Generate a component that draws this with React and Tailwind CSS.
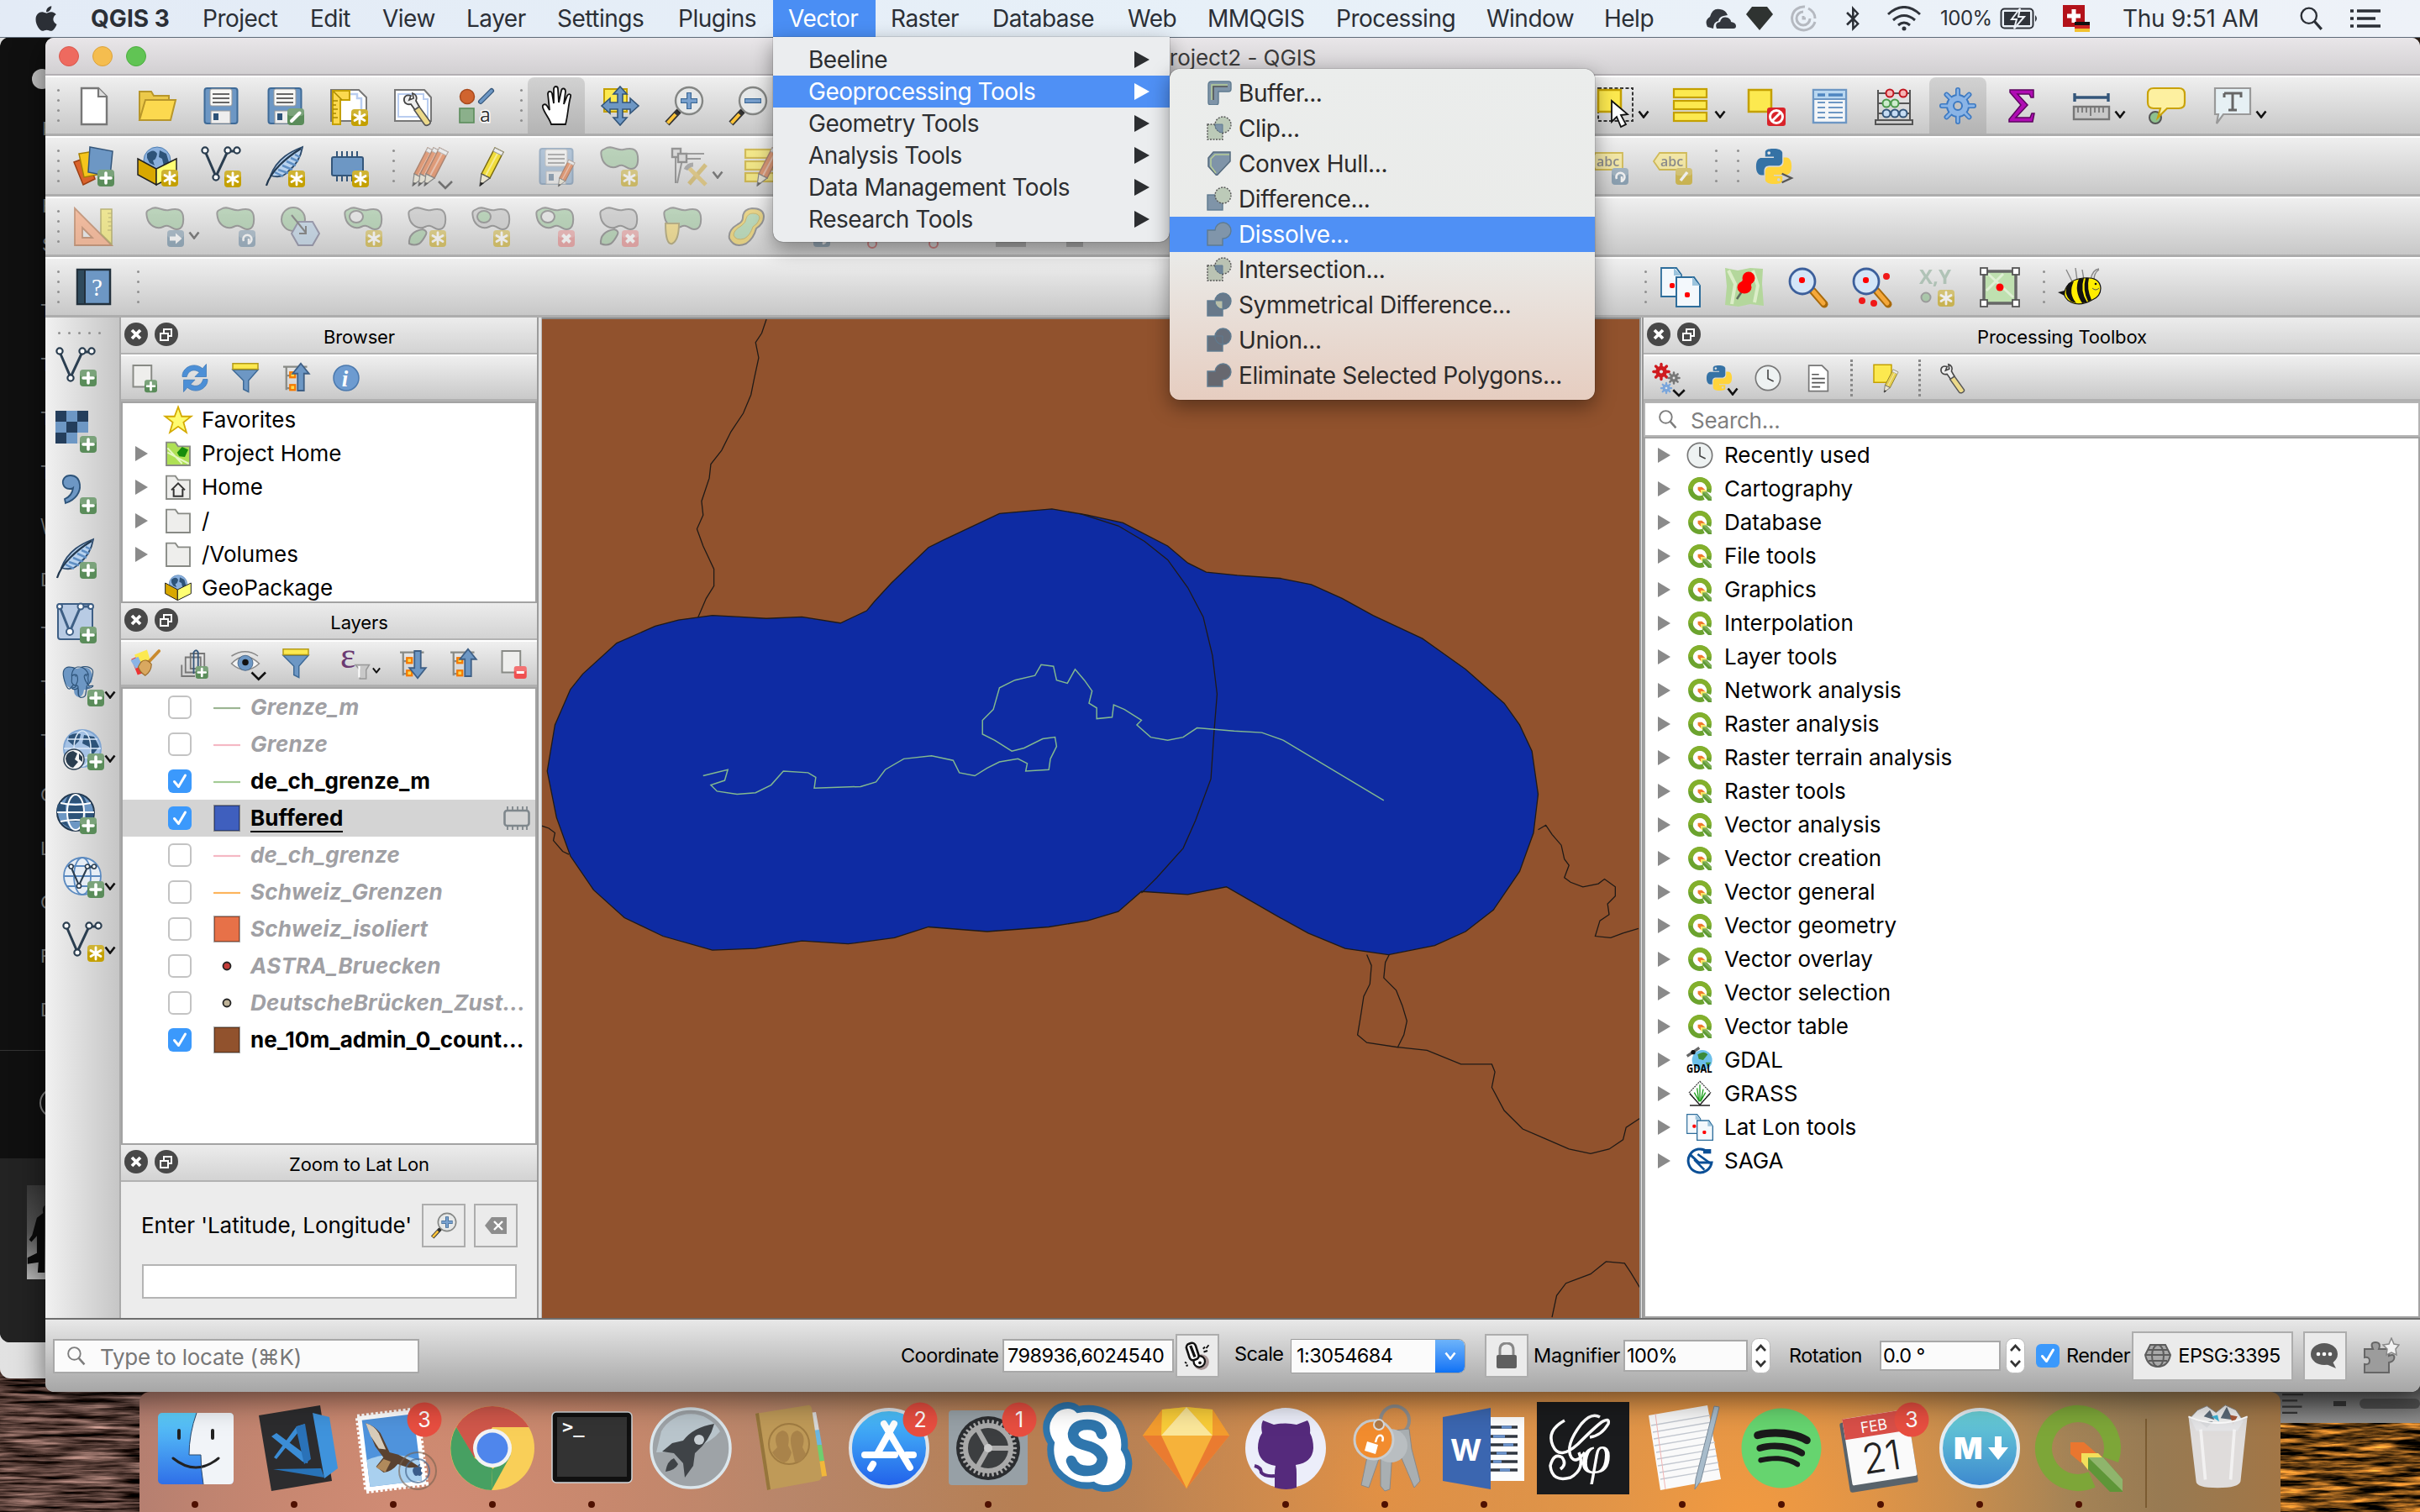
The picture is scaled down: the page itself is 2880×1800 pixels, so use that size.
import React from "react";
import { FaApple, FaBluetoothB, FaSpotify } from "react-icons/fa";
import { SiPostgresql } from "react-icons/si";

/* ---------- icon primitives ---------- */
const Ico = ({ children, c = "w-12 h-12", o = "", vb = "0 0 48 48" }) => (
  <svg viewBox={vb} className={`shrink-0 overflow-visible ${c} ${o}`} fill="none">{children}</svg>
);
const Badge = ({ fill, x = 28, y = 28, children }) => (
  <g transform={`translate(${x} ${y})`}>
    <rect width="20" height="20" rx="4" fill={fill} />
    <rect width="20" height="9" rx="4" fill="#fff" opacity=".2" />
    {children}
  </g>
);
const PlusB = (p) => <Badge fill="#5a8c5a" {...p}><path d="M10 4v12M4 10h12" stroke="#fff" strokeWidth="3.6" strokeLinecap="round" /></Badge>;
const StarB = (p) => <Badge fill="#c4a000" {...p}><path d="M10 3v14M4 6.5l12 7M16 6.5l-12 7" stroke="#fff" strokeWidth="2.8" strokeLinecap="round" /></Badge>;
const RotB = (p) => <Badge fill="#5b7d99" {...p}><path d="M6 13a5 5 0 1 1 6 2.5M12 10v7" stroke="#fff" strokeWidth="2.6" /></Badge>;
const XB = (p) => <Badge fill="#e07070" {...p}><path d="M5.5 5.5l9 9M14.5 5.5l-9 9" stroke="#fff" strokeWidth="4" /></Badge>;
const ArrB = (p) => <Badge fill="#4d7390" {...p}><path d="M3 7.5h7V3.5L17.5 10 10 16.5v-4H3z" fill="#fff" /></Badge>;
const PenB = (p) => <Badge fill="#5a8c5a" {...p}><path d="M5 15L14.5 5.5" stroke="#fff" strokeWidth="4" strokeLinecap="round" /></Badge>;

const Chev = ({ c = "", s = "#111" }) => (
  <svg viewBox="0 0 14 10" className={`w-3.5 h-2.5 shrink-0 ${c}`} fill="none"><path d="M1.5 1.5L7 8.5l5.5-7" stroke={s} strokeWidth="2.6" /></svg>
);
const Grip = ({ c = "w-[19px] pl-[14px]" }) => (
  <div className={`flex h-full shrink-0 flex-col justify-center gap-[9px] ${c}`}>
    {[0, 1, 2, 3].map((i) => <i key={i} className="block h-[3px] w-[3px] rounded-full bg-[#8f8f8f]" />)}
  </div>
);
const Slot = ({ children, c = "w-[76px]" }) => <div className={`flex h-full shrink-0 items-center justify-center ${c}`}>{children}</div>;
const SlotV = ({ children, c = "w-[92px]", s }) => (
  <div className={`flex h-full shrink-0 items-center pl-[17px] ${c}`}>
    {children}<Chev c="mt-5 ml-[3px]" s={s} />
  </div>
);

/* ---------- toolbar icons ---------- */
const Page = () => <path d="M8 3h22l10 10v33H8z" fill="#fff" stroke="#777" strokeWidth="2.4" />;
const NewDoc = () => <Ico><path d="M9 3h20l10 10v33H9z" fill="#fff" stroke="#777" strokeWidth="2.4" /><path d="M29 3v10h10" fill="#ddd" stroke="#777" strokeWidth="2.2" /></Ico>;
const Folder = () => <Ico><path d="M3 41V7h14l3 5h18v6" fill="#ecc94a" stroke="#b8962a" strokeWidth="2" /><path d="M3 41L10 17h36l-6 24z" fill="#fcd94f" stroke="#b8962a" strokeWidth="2" /></Ico>;
const Disk = ({ o }) => (
  <g opacity={o}>
    <rect x="4.500" y="3" width="39" height="42" rx="3" fill="#6d97c4" stroke="#3e6a97" strokeWidth="2" />
    <rect x="11" y="4" width="26" height="20" rx="2" fill="#f7f7f5" stroke="#999" />
    <path d="M14 10h20M14 15h20M14 20h20" stroke="#666" strokeWidth="2" />
    <rect x="12" y="30" width="23" height="15" fill="#eee" stroke="#999" /><rect x="15" y="33" width="6" height="8" fill="#2d5379" />
  </g>
);
const Layout = () => (
  <Ico><path d="M3 5h33l9 9v28H3z" fill="#fff" stroke="#777" strokeWidth="2" /><path d="M14 10h20v5h5v22" stroke="#b9cdf0" strokeWidth="2.5" />
    <path d="M5 6h20v11H14v29H5z" fill="#fcd94f" stroke="#c4a000" strokeWidth="2" /><path d="M5 18h6M5 23h4M5 28h6M5 33h4M5 38h6M6 7l10 10" stroke="#a88800" strokeWidth="1.5" /><StarB x={27} /></Ico>
);
const Wrench = () => (
  <g><path d="M22 12c-5-2-9 1-8 6 .6 3 4 5 8 4l5 7 5-4-4-7c2-4 0-8-4-9l1 6-5 2z" fill="#eee" stroke="#444" strokeWidth="1.8" />
    <path d="M26 29l6-4 13 18c1 3-5 6-7 3z" fill="#ecd98a" stroke="#555" strokeWidth="1.6" /></g>
);
const LayoutMgr = () => <Ico><path d="M3 5h35l8 9v28H3z" fill="#fff" stroke="#777" strokeWidth="2" /><path d="M7 10h30v6h5v21H7z" stroke="#b9cdf0" strokeWidth="2" /><Wrench /></Ico>;
const StyleMgr = () => (
  <Ico><circle cx="13" cy="13" r="8.500" fill="#d0642f" stroke="#a84b1e" strokeWidth="1.5" /><path d="M29 19L42 6" stroke="#34567a" strokeWidth="6" strokeLinecap="round" /><path d="M29 19L42 6" stroke="#6d97c4" strokeWidth="3.5" strokeLinecap="round" />
    <rect x="4" y="27" width="17" height="17" fill="#8bb08b" stroke="#5a8c5a" strokeWidth="1.6" /><text x="28" y="43" fontSize="23" fontFamily="Open Sans" fill="#333" stroke="#fff" strokeWidth="3" paintOrder="stroke">a</text></Ico>
);
const Hand = () => (
  <Ico><path d="M15 46c-2-7-8-13-10-20-1-4 3-5 5-2l3 5-2-19c0-4 4-4 5-1l2 12V4c0-4 5-4 5 0l1 16 3-14c1-4 5-3 5 1l-2 15 4-10c2-3 5-2 4 1-3 11-3 22-6 33z" fill="#fff" stroke="#111" strokeWidth="1.8" /></Ico>
);
const PanSel = () => (
  <Ico><rect x="5" y="4" width="27" height="27" fill="#fce94f" stroke="#c4a000" strokeWidth="2" />
    <path d="M24 1l8 9h-5v10h9v-5l10 9-10 9v-5h-9v10h5l-8 9-8-9h5V28H12v5L2 24l10-9v5h9V10h-5z" fill="#6d97c4" stroke="#34567a" strokeWidth="1.6" /></Ico>
);
const Mag = ({ plus, c }) => (
  <Ico c={c}><path d="M18 30L4 45" stroke="#333" strokeWidth="7" /><path d="M14 34L4.500 44.500" stroke="#fcc43a" strokeWidth="4" /><path d="M17 31l4-4" stroke="#222" strokeWidth="5" />
    <circle cx="30" cy="18" r="16" fill="#e6e8e8" stroke="#848684" strokeWidth="2.4" />
    <path d={plus ? "M20 18h20M30 8v20" : "M20 18h20"} stroke="#3e6a97" strokeWidth="6" /><path d={plus ? "M21 18h18M30 9v18" : "M21 18h18"} stroke="#7aa2cf" strokeWidth="3.5" /></Ico>
);
const Cursor = () => (
  <Ico><rect x="4" y="3" width="41" height="39" stroke="#333" strokeWidth="2" strokeDasharray="4 2.500" /><rect x="4" y="5" width="27" height="26" fill="#fce94f" stroke="#c4a000" strokeWidth="2.5" />
    <path d="M20 18v25l6-6 5 12 6-3-6-11 8-1z" fill="#fff" stroke="#111" strokeWidth="1.8" /></Ico>
);
const Bars = ({ pencil }) => (
  <Ico>{[4, 18, 32].map((y) => <rect key={y} x="3" y={y} width="39" height="10" fill="#fce94f" stroke="#c4a000" strokeWidth="2.200" />)}{pencil && <Pen x={8} />}</Ico>
);
const Desel = () => <Ico><rect x="3" y="5" width="27" height="26" fill="#fce94f" stroke="#c4a000" strokeWidth="2.500" /><rect x="25" y="26" width="22" height="22" rx="3" fill="#d9232a" /><circle cx="36" cy="37" r="7.500" stroke="#fff" strokeWidth="3" /><path d="M31 42l10-10" stroke="#fff" strokeWidth="3" /></Ico>;
const Table = () => (
  <Ico><rect x="4" y="5" width="39" height="39" fill="#f4f6f8" stroke="#6d97c4" strokeWidth="2.400" /><rect x="5" y="6" width="37" height="9" fill="#b9d7f0" />
    <path d="M9 11h9M22 11h17" stroke="#4f86c0" strokeWidth="3.500" /><path d="M9 20h9M22 20h17M9 26h9M22 26h17M9 32h9M22 32h17M9 38h9M22 38h17" stroke="#6d97c4" strokeWidth="2.200" /><path d="M4 16h39" stroke="#6d97c4" strokeWidth="2" /></Ico>
);
const Abacus = () => (
  <Ico><path d="M5 5v36M43 5v36M5 9h38M5 21h38M5 33h38" stroke="#555" strokeWidth="2" /><rect x="2" y="41" width="44" height="5" fill="#ccc" stroke="#555" strokeWidth="2" />
    {[[19, 9, "#f6b5b5", "#c0151f"], [35, 9, "#f6b5b5", "#c0151f"], [15, 21, "#cdeccd", "#4c9a4c"], [25, 21, "#cdeccd", "#4c9a4c"], [15, 33, "#c6dcf3", "#34567a"], [25, 33, "#c6dcf3", "#34567a"], [35, 33, "#c6dcf3", "#34567a"]].map(([x, y, f, s], i) => <circle key={i} cx={x} cy={y} r="4.500" fill={f} stroke={s} strokeWidth="2" />)}</Ico>
);
const gearTeeth = (n, r1, r2, w) => Array.from({ length: n }, (_, i) => {
  const a = (i * 2 * Math.PI) / n;
  return <line key={i} x1={Math.cos(a) * r1} y1={Math.sin(a) * r1} x2={Math.cos(a) * r2} y2={Math.sin(a) * r2} strokeWidth={w} strokeLinecap="round" />;
});
const Gear = () => (
  <Ico><g transform="translate(24 24)"><g stroke="#3c79c2">{gearTeeth(8, 10, 19, 6)}</g><circle r="13" fill="#8ab4e6" stroke="#3c79c2" strokeWidth="2" />
    <g stroke="#8ab4e6">{gearTeeth(8, 10, 19, 2.8)}</g><circle r="5" fill="#c2c2c2" stroke="#3c79c2" strokeWidth="2" /></g></Ico>
);
const Sigma = () => <Ico><path d="M10 5h28v9h-3l-2-4H19l12 13-14 15h17l2-5h3l-2 10H9v-3l14-17L10 8z" fill="#b00cb4" stroke="#5d0560" strokeWidth="1.500" /></Ico>;
const Ruler = () => <Ico><path d="M4 14h40M4 9v10M44 9v10" stroke="#34567a" strokeWidth="3.400" /><rect x="3" y="25" width="42" height="15" fill="#c8c8c8" stroke="#777" strokeWidth="2.400" /><path d="M8 26v6M13 26v6M18 26v6M23 26v10M28 26v6M33 26v6M38 26v6" stroke="#777" strokeWidth="1.800" /></Ico>;
const Tip = () => <Ico><circle cx="11" cy="38" r="7" fill="#8ec08e" stroke="#555" strokeWidth="2" /><path d="M9 3h30q7 0 7 7v10q0 7-7 7H25L14 38l3-11H9q-7 0-7-7V10q0-7 7-7z" fill="#fdf0a0" stroke="#c9a20a" strokeWidth="2.200" /></Ico>;
const TextAnn = () => <Ico><path d="M3 3h42v31H13L5 45l2-11H3z" fill="#e6f0f4" stroke="#999" strokeWidth="2.200" /><path d="M14 9h20v5M14 14V9M24 9v20M19 29h10" stroke="#666" strokeWidth="3" /></Ico>;

const AddData = () => <Ico><path d="M1 19l16-6 9 26-14 7z" fill="#d9622b" stroke="#9b3f14" strokeWidth="1.500" /><path d="M7 9l18-3 4 28-16 3z" fill="#f5c51c" stroke="#a68005" strokeWidth="1.500" /><path d="M20 1l27 5-3 30-26-5z" fill="#6d97c4" stroke="#34567a" strokeWidth="1.500" /><PlusB x={29} /></Ico>;
const Box = ({ badge, c }) => (
  <Ico c={c}><circle cx="24" cy="17" r="16" fill="#8ab0dd" stroke="#4f7fb4" /><path d="M12 9q8-7 12 0-1 7-5 8l2 6-6-3-3-6zM27 5l8 4 3 10-6 5-2-9-4-2z" fill="#2d5379" />
    <path d="M1 15l22 12v19L1 34z" fill="#d9a800" stroke="#222" strokeWidth="1.500" /><path d="M47 15L23 27v19l24-12z" fill="#ffff73" stroke="#222" strokeWidth="1.500" />{badge && <StarB x={29} />}</Ico>
);
const VLine = ({ children, globe }) => (
  <Ico>{globe && <g stroke="#5b8ac0" strokeWidth="1.800"><circle cx="24" cy="22" r="22" fill="#e6edf5" /><ellipse cx="24" cy="22" rx="10" ry="22" /><path d="M2 22h44M6 10h36M6 34h36" /></g>}
    <g transform={globe ? "translate(7 7) scale(.72)" : ""} stroke="#2b3e50"><path d="M5 6l13 30L32 6h12" strokeWidth="3" />
      {[[5, 5], [18, 37], [32, 5], [43, 5]].map(([x, y]) => <circle key={x} cx={x} cy={y} r="3.600" fill="#fff" strokeWidth="2.200" />)}</g>{children}</Ico>
);
const Feather = ({ children }) => (
  <Ico><path d="M45 1C32 6 15 14 7 35c10 3 17 0 21-5 10-8 15-17 17-29z" fill="#b8d2ee" stroke="#2d4a6b" strokeWidth="1.800" /><path d="M36 10l6 3M31 14l9 4M26 18l11 5M21 23l12 5M16 28l12 4M12 31l10 5" stroke="#5f8fc4" strokeWidth="2.500" /><path d="M43 3C25 14 7 30 2 47" stroke="#22384f" strokeWidth="2.200" />{children}</Ico>
);
const Chip = () => <Ico><path d="M10 6v36M16 6v36M22 6v36M28 6v36M34 6v36" stroke="#34567a" strokeWidth="2" /><rect x="4" y="13" width="37" height="22" rx="2" fill="#6d97c4" stroke="#34567a" strokeWidth="2" /><StarB x={28} y={29} /></Ico>;
const Pen = ({ x = 0, col = "#e07038", dark = "#8a4a2a" }) => (
  <g transform={`translate(${x} 0)`}><path d="M11 33L27 2l10 5-16 31z" fill={col} stroke={dark} strokeWidth="1.500" /><path d="M16 35L32 5" stroke="#fff" opacity=".45" strokeWidth="2" /><path d="M11 33l10 5-12 9z" fill="#e9e4d0" stroke="#555" strokeWidth="1.200" /><path d="M27 2l10 5-2 4-10-5z" fill="#eee" stroke="#999" /><path d="M10 43l4 1-5 4z" fill="#222" /></g>
);
const blob = "M6 3c8-5 14 3 22 1s16-2 17 8-2 15-8 15-8-7-16-3S4 22 2 13 3 5 6 3z";
const Blob = ({ fill = "#8fbf8f", ring, inner, child, children }) => (
  <Ico o="opacity-50"><path d={blob} fill={fill} stroke="#555" strokeWidth="2" />{ring && <ellipse cx="15" cy="12" rx="8" ry="7" fill="#e0e0e0" stroke="#555" strokeWidth="2" />}
    {inner && <ellipse cx="15" cy="12" rx="8" ry="7" fill="#8fbf8f" stroke="#555" strokeWidth="2" />}{child && <path d="M2 44q-1-14 16-17 6 2 4 6-4 8-8 11-6 3-12 0z" fill="#8fbf8f" stroke="#555" strokeWidth="2" />}{children}</Ico>
);
const Tri = () => <Ico o="opacity-60"><path d="M2 2l44 44H2z" fill="#f8a072" stroke="#b06a40" strokeWidth="1.800" /><path d="M11 25l12 12H11z" fill="#e4e4e4" stroke="#b06a40" strokeWidth="1.800" /><path d="M33 3h13v42L33 32z" fill="#f2e55e" stroke="#9b9030" strokeWidth="1.500" /><path d="M46 8h-5M46 13h-4M46 18h-5M46 23h-4M46 28h-5" stroke="#9b9030" /></Ico>;
const Python = ({ c, prompt }) => {
  const d = "M14.250.18l.9.2.73.26.59.3.45.32.34.34.25.34.16.33.1.3.04.26.02.2-.01.13V8.500l-.05.63-.13.55-.21.46-.26.38-.3.31-.33.25-.35.19-.35.14-.33.1-.3.07-.26.04-.21.02H8.770l-.69.05-.59.14-.5.22-.41.27-.33.32-.27.35-.2.36-.15.37-.1.35-.07.32-.04.27-.02.21v3.060H3.170l-.21-.03-.28-.07-.32-.12-.35-.18-.36-.26-.36-.36-.35-.46-.32-.59-.28-.73-.21-.88-.14-1.050-.05-1.230.06-1.220.16-1.040.24-.87.32-.71.36-.57.4-.44.42-.33.42-.24.4-.16.36-.1.32-.05.24-.01h.16l.06.01h8.160v-.83H6.180l-.01-2.750-.02-.37.05-.34.11-.31.17-.28.25-.26.31-.23.38-.2.44-.18.51-.15.58-.12.64-.1.71-.06.77-.04.84-.02 1.270.05zm-6.300 1.980l-.23.33-.08.41.08.41.23.34.33.22.41.09.41-.09.33-.22.23-.34.08-.41-.08-.41-.23-.33-.33-.22-.41-.09-.41.09z";
  return <Ico c={c} vb="0 0 24 24"><path d={d} fill="#3572a5" fillRule="evenodd" /><path d={d} transform="rotate(180 12 12)" fill="#ffd43b" fillRule="evenodd" />{prompt && <path d="M17.500 17l6.500 3-6.500 3" stroke="#555" strokeWidth="1.300" />}</Ico>;
};
const Abc = ({ children }) => <Ico o="opacity-60"><path d="M2 18l7-10h32v20H9z" fill="#fce97f" stroke="#c4a000" strokeWidth="1.800" /><text x="10" y="24" fontSize="16" fontWeight="600" fontFamily="Open Sans" fill="#555">abc</text>{children}</Ico>;
const Pages = ({ c }) => (
  <Ico c={c}><path d="M1 1h18l6 8v26H1z" fill="#f3f8fc" stroke="#2d6d9b" strokeWidth="1.800" /><path d="M19 12h21l7 10v25H19z" fill="#f3f8fc" stroke="#2d6d9b" strokeWidth="2" /><path d="M38 12v10h9" fill="#9cc4dd" /><path d="M16 1v9h9" fill="#9cc4dd" /><rect x="11" y="19" width="6" height="6" rx="2" fill="#f00" /><rect x="29" y="30" width="6" height="6" rx="2" fill="#f00" /></Ico>
);
const MapPin = () => <Ico><path d="M1 1l15 3 15-3 15 1-1 18 2 26-16-2-14 3-16-2 2-22z" fill="#b4d79c" /><path d="M5 4l8 16-4 24M34 4l6 18-4 20" stroke="#dcedc8" strokeWidth="4" /><path d="M15 38l8-12" stroke="#5a6a5a" strokeWidth="2.500" /><ellipse cx="24" cy="24" rx="8.500" ry="7.500" fill="#f00" /><path d="M20 20l3-8h11l-3 14z" fill="#f00" /><circle cx="29" cy="13" r="7.500" fill="#f00" /></Ico>;
const Mag2 = ({ more }) => (
  <Ico><path d="M29 28l14 16" stroke="#a8690a" strokeWidth="9" strokeLinecap="round" /><path d="M30 29l12 14" stroke="#f5a83a" strokeWidth="5" strokeLinecap="round" /><circle cx="17" cy="17" r="15" fill="#d4e6f8" stroke="#3c5f9b" strokeWidth="2.800" /><rect x="13" y="12" width="7" height="7" rx="3" fill="#f00" />
    {more && <g fill="#f01818"><circle cx="41" cy="11" r="4" /><circle cx="12" cy="40" r="4" /><circle cx="26" cy="43" r="4" /></g>}</Ico>
);
const XY = () => <Ico o="opacity-60"><text x="4" y="20" fontSize="23" fontWeight="700" fontFamily="Open Sans" textLength="38" lengthAdjust="spacingAndGlyphs" fill="#8fae9a">X,Y</text><circle cx="12" cy="36" r="5.500" fill="#8fbf8f" stroke="#777" strokeWidth="2" /><StarB x={26} y={27} /></Ico>;
const Extent = () => <Ico><rect x="5" y="5" width="38" height="38" fill="#bfe0b0" stroke="#666" strokeWidth="3.500" /><path d="M10 8l30 28M8 28l20-20" stroke="#dff0d4" strokeWidth="3" /><circle cx="24" cy="24" r="4.500" fill="#f00" />{[[5, 5], [43, 5], [5, 43], [43, 43]].map(([x, y], i) => <rect key={i} x={x - 4} y={y - 4} width="8" height="8" fill="#fff" stroke="#555" strokeWidth="1.800" />)}</Ico>;
const Bee = () => (
  <Ico c="w-[54px] h-[46px]" vb="0 0 54 46"><path d="M18 16L11 2M24 15L22 0M32 14L30 2M40 14q2-12 10-13M44 14q0-8 6-12" stroke="#888" strokeWidth="1.400" /><path d="M9 28q4-14 22-16 20-2 21 12 0 10-10 14-14 8-25 3-10-5-8-13z" fill="#ffed00" stroke="#111" strokeWidth="1.200" />
    <path d="M14 18q-8 12 3 22l6 2q-10-12-3-26zM26 13q-6 14 4 29l6-1Q27 27 32 12z" fill="#111" /><path d="M38 12q-3 12 3 26l-4 2Q30 26 34 12z" fill="#111" /><path d="M9 27l-8 2 8 4z" fill="#111" /><circle cx="46" cy="19" r="1.300" fill="#111" /><path d="M42 24q4 4 8 0" stroke="#555" /></Ico>
);
const Book = () => <Ico><path d="M4 3h39v41H4z" fill="#6d97c4" stroke="#22303c" strokeWidth="2.500" /><path d="M4 3h9v41H4z" fill="#2f4a5c" stroke="#22303c" strokeWidth="2" /><text x="21" y="34" fontSize="29" fontFamily="Liberation Serif" fill="#fff">?</text></Ico>;
const NodeTool = () => <Ico o="opacity-50"><path d="M8 9v35M16 16l-6 28M17 9h25M20 15h18" stroke="#555" strokeWidth="2" /><rect x="4" y="3" width="10" height="10" stroke="#444" strokeWidth="2.400" fill="#ccc" /><rect x="11" y="9" width="10" height="10" stroke="#444" strokeWidth="2.400" fill="#ccc" /><path d="M44 22L24 45" stroke="#c9a22c" strokeWidth="5" /><path d="M24 26l20 20" stroke="#d9b13c" strokeWidth="5" /><path d="M20 28q3-6 9-6" stroke="#777" strokeWidth="5" /></Ico>;
const Raster = () => <Ico><rect width="39" height="39" fill="#6d97c4" /><path d="M0 0h13v13H0zM26 0h13v13H26zM13 13h13v13H13zM0 26h13v13H0z" fill="#243e5c" /><rect x="26" y="26" width="13" height="13" fill="#d0d0d0" /><PlusB x={29} y={30} /></Ico>;
const Comma = () => <Ico><path d="M18 1c-7 0-10 5-9 10 1 4 4 6 8 6 1 0 3 0 4-1-1 7-5 11-10 13l1 5c12-4 18-13 17-22C28 5 24 1 18 1z" fill="#6d97c4" stroke="#2d5379" strokeWidth="1.800" /><PlusB x={29} y={27} /></Ico>;
const VBox = () => <Ico><rect x="3" y="2" width="41" height="42" rx="3" fill="#b8cbe4" stroke="#3e5f85" strokeWidth="2" /><path d="M5 5l12 30L30 5h12" stroke="#3e5f85" strokeWidth="3" /><circle cx="17" cy="35" r="4" fill="#fff" stroke="#3e5f85" strokeWidth="2" /><circle cx="30" cy="5" r="3.500" fill="#fff" stroke="#3e5f85" strokeWidth="2" /><circle cx="5" cy="5" r="3" fill="#fff" stroke="#3e5f85" strokeWidth="2" /><circle cx="42" cy="5" r="3" fill="#fff" stroke="#3e5f85" strokeWidth="2" /><PlusB x={29} y={29} /></Ico>;
const Elephant = () => <Ico><path d="M3 3q7-4 14 0 10-3 15 0 6 6 3 16l-6 5h5q-3 5-8 4-1 8-6 9-6-1-6-9-10-3-12-12Q0 8 3 3z" fill="#6d97c4" /><SiPostgresql x="0" y="0" size="38" color="#2d5379" /><PlusB x={30} y={28} /></Ico>;
const Globe = ({ kind }) => (
  <Ico>{kind === "wms" ? <g><circle cx="24" cy="22" r="22" fill="#6d97c4" stroke="#22384f" strokeWidth="2" /><path d="M15 2h18l4 9H11zM3 12h9v10H1zM14 12h20v10H14zM36 22h10l-2 10h-8zM14 23h20v10H14zM5 33h8l5 9z" fill="#2d5379" /><g stroke="#fff" strokeWidth="2"><ellipse cx="24" cy="22" rx="10" ry="21" /><path d="M2 22h44M6 11q18 4 36 0M6 33q18-4 36 0" /></g><PlusB x={29} /></g>
    : <g><circle cx="24" cy="22" r="22" fill="#a5c2e5" stroke="#7fa5d2" strokeWidth="2" /><path d="M8 7q8-5 14-2l-2 8-6 6-7-6zM26 6l12 2 6 12-8 10-4-10-8-4z" fill="#2d5379" /><g stroke="#dce9f7" strokeWidth="1.500"><ellipse cx="24" cy="22" rx="10" ry="21" /><path d="M2 22h44M6 11h36M6 33h36" /></g><circle cx="14" cy="35" r="12" fill="#f5f5f5" stroke="#2b3e50" strokeWidth="1.500" /><path d="M4 34q1-8 9-9l5 3-3 7 4 3-6 7q-8-2-9-11zM20 28l4 4v6l-4-3z" fill="#2b3e50" /><PlusB x={30} /></g>}</Ico>
);

/* ---------- small panel icons ---------- */
const S = "w-9 h-9";
const AddGrp = ({ red }) => <Ico c={S}><path d="M6 4h29v34H6z" fill="#eeeeec" stroke="#888a85" strokeWidth="2.600" />{red ? <Badge fill="#f05050" x={25} y={28}><path d="M4 10h12" stroke="#fff" strokeWidth="4" /></Badge> : <PlusB x={24} y={27} />}</Ico>;
const Refresh = () => <Ico c={S}><path d="M4 22C3 8 22-3 36 9l6-7v20H24l7-7c-9-7-18-2-20 7zM44 26c1 14-18 25-32 13l-6 7V27h18l-7 7c9 6 18 1 20-8z" fill="#4c8fd6" stroke="#3a75b5" /></Ico>;
const Funnel = () => <Ico c={S}><path d="M4 11h40L29 28v18l-8-4V28z" fill="#6d97c4" stroke="#3e6a97" strokeWidth="2" /><rect x="4" y="1" width="40" height="9" fill="#fce94f" stroke="#b39a1a" strokeWidth="2" /></Ico>;
const Tree = ({ up }) => <Ico c={S}><path d="M4 6h38M9 6v37M9 20h8M9 40h8" stroke="#888a85" strokeWidth="3" /><rect x="15" y="15" width="8" height="8" stroke="#f57900" strokeWidth="3" fill="#fcd94f" /><rect x="15" y="35" width="8" height="8" stroke="#f57900" strokeWidth="3" fill="#fcd94f" /><path transform={up ? "" : "rotate(180 32 24)"} d="M32 1l13 16h-8v27H27V17h-8z" fill="#6d97c4" stroke="#3e5f85" strokeWidth="2.400" /></Ico>;
const Info = () => <Ico c={S}><circle cx="24" cy="24" r="20" fill="#6d9bd0" stroke="#4a78ad" strokeWidth="2" /><text x="17" y="37" fontSize="36" fontWeight="700" fontStyle="italic" fontFamily="Liberation Serif" fill="#fff">i</text></Ico>;
const Brush = () => <Ico c={S}><path d="M3 17l17-8 12 26-19 7z" fill="#e33" /><path d="M8 10l20-8 6 20-16 8z" fill="#fce94f" /><path d="M2 19l12-6 6 13-10 6z" fill="#8ab4e6" /><path d="M47 4L30 22" stroke="#c98a2e" strokeWidth="5" strokeLinecap="round" /><path d="M18 22q8-8 17 3 0 11-10 18-9-6-11-14z" fill="#d9a860" stroke="#9a6a2a" strokeWidth="1.500" /></Ico>;
const Clips = () => <Ico c={S}><path d="M3 26v18h21M9 14v24h24V14zM17 8h22v24H17z" stroke="#777" strokeWidth="2.400" /><path d="M22 40V6q4-6 7 0v26" stroke="#34567a" strokeWidth="2.400" /><PlusB x={25} y={28} /></Ico>;
const Eye = () => <Ico c={S}><path d="M2 24Q23 2 46 24 24 44 2 24z" fill="#f4f4f4" stroke="#888" strokeWidth="2" /><path d="M2 12Q24-2 44 12" stroke="#888" strokeWidth="2" /><circle cx="24" cy="23" r="12" fill="#6d97c4" stroke="#34567a" /><circle cx="24" cy="22" r="5" fill="#111" /><path d="M34 38l11 11 11-11" stroke="#111" strokeWidth="3.500" /></Ico>;
const Eps = () => <Ico c={S}><text x="0" y="30" fontSize="58" fontFamily="Liberation Serif" fill="#6b3a72">ε</text><path d="M24 26h22l-5 8v14h-10V34z" fill="#c8c8c8" stroke="#999" strokeWidth="2" /><path d="M30 28v18" stroke="#fff" strokeWidth="3" /></Ico>;
const Gears = () => <Ico c={S}>{[[12, 14, 9, "#cf1b1f"], [32, 24, 6.5, "#777"], [20, 40, 6, "#7aa6dc"]].map(([x, y, r, f]) => <g key={x} transform={`translate(${x} ${y})`} stroke={f}>{gearTeeth(8, 3, r * 1.35, r * 0.5)}<circle r={r} fill={f} stroke="none" /><circle r={r * 0.3} fill="#e5e5e5" stroke="none" /></g>)}<path d="M31 43l9 9 9-9" stroke="#111" strokeWidth="3.500" /></Ico>;
const Clock = () => <Ico c="w-8 h-8"><circle cx="24" cy="24" r="22" fill="#eef2f2" stroke="#777" strokeWidth="2.500" /><path d="M24 9v16l10 5" stroke="#444" strokeWidth="2.400" /></Ico>;
const Log = () => <Ico c="w-[34px] h-[34px]"><Page /><path d="M13 18h12M13 25h22M13 32h22M13 39h14" stroke="#555" strokeWidth="2.400" /></Ico>;
const Note = () => <Ico c={S}><rect x="4" y="3" width="28" height="28" fill="#fce94f" stroke="#c4a000" strokeWidth="2" /><g transform="translate(13 9) scale(.8)"><Pen col="#e6cf50" dark="#8a7a2a" /></g></Ico>;
const WrenchI = () => <Ico c="w-[34px] h-[34px]"><g transform="translate(-16 -10) scale(1.250)"><Wrench /></g></Ico>;
const Qgis = ({ c = "w-8 h-8" }) => (
  <Ico c={c} vb="-52 -52 104 104">
    <circle r="41" transform="rotate(66)" stroke="#6ba32e" strokeWidth="21" strokeDasharray="224 34" />
    <path d="M-41 0A41 41 0 0 1 41 0" stroke="#8db52c" strokeWidth="21" opacity=".7" />
    <path d="M-9-8H9L24 5H4v13L-9 5z" fill="#ee7a2b" /><path d="M4 5h20l8 8H12v14L4 17z" fill="#f5e65c" /><path d="M12 13h18l22 24v15H37L12 27z" fill="#5f9a33" /><path d="M12 13h18l22 24v13z" fill="#8cb868" opacity=".7" />
  </Ico>
);
const FolderS = ({ kind }) => (
  <Ico c="w-8 h-8"><path d="M3 4h16l5 7h21v34H3z" fill={kind === "map" ? "#aee054" : "#eeeeec"} stroke="#888a85" strokeWidth="2.800" />
    {kind === "home" && <path d="M12 29l12-12 12 12M16 27v13h16V27" stroke="#333" strokeWidth="3" />}{kind === "map" && <g><path d="M5 22l38 20M5 14l26 28" stroke="#e6f7c4" strokeWidth="3" /><path d="M22 22l9-10 11 5-6 13-10-1z" fill="#168c0c" /></g>}</Ico>
);
const Star = () => <Ico c="w-[34px] h-[34px]"><path d="M24 2l6 16h16L33 28l5 17-14-10-14 10 5-17L2 18h16z" fill="#fffb70" stroke="#d4aa00" strokeWidth="2.500" /></Ico>;
const Gdal = () => <Ico c="w-8 h-8"><circle cx="28" cy="24" r="18" fill="#6cc0ea" /><path d="M20 14q12-8 18 0l-8 10-8-2zM34 28l10 0-6 8z" fill="#3a8a3a" /><path d="M1 17L23 2" stroke="#666" strokeWidth="5" /><circle cx="12" cy="10" r="4" fill="#111" /><text x="0" y="47" fontSize="22" fontWeight="700" fontFamily="Open Sans" textLength="46" lengthAdjust="spacingAndGlyphs" fill="#000">GDAL</text></Ico>;
const Grass = () => <Ico c="w-8 h-8"><path d="M24 2l19 20-19 22L5 22z" stroke="#333" strokeWidth="1.800" strokeDasharray="3 1.500" fill="#fff" /><path d="M24 38V8M23 38L14 22M25 38l9-16M22 36L19 14M26 36l4-20" stroke="#1fa01f" strokeWidth="2" /><path d="M6 24l18 20 18-20M6 45h36" stroke="#222" strokeWidth="2" /></Ico>;
const Saga = () => <Ico c="w-8 h-8"><path d="M38 8A21 21 0 1 0 45 27H22L8 14" stroke="#0b4f96" strokeWidth="4.500" /><path d="M20 12l22 16M14 22l18 18" stroke="#0b4f96" strokeWidth="4" /><path d="M30 3h14v8H30z" fill="#0b4f96" /></Ico>;
const Loupe = ({ c = "w-7 h-7", s = "#7d7d7d" }) => <Ico c={c} vb="0 0 28 28"><circle cx="11" cy="11" r="8.500" stroke={s} strokeWidth="2.200" /><path d="M17 17l8 9" stroke={s} strokeWidth="3" /></Ico>;

/* ---------- window pieces ---------- */
const row = "flex h-[72px] shrink-0 items-center border-t-2 border-b-[3px] border-t-white border-b-[#adadad] bg-linear-to-b from-[#efefef] to-[#c8c8c8]";
const Bar = ({ children }) => <div className={row}>{children}</div>;

const PanelHead = ({ title }) => (
  <div className="flex h-11 shrink-0 items-center border-b-2 border-[#b2b2b2] bg-linear-to-b from-[#ececec] to-[#d3d3d3] pl-1">
    {[0, 1].map((i) => (
      <svg key={i} viewBox="0 0 28 28" className="mr-2 -mt-0.5 h-7 w-7" fill="none"><circle cx="14" cy="14" r="14" fill="#484848" />
        {i === 0 ? <path d="M9 9l10 10M19 9L9 19" stroke="#fff" strokeWidth="3.800" /> : <g stroke="#fff" strokeWidth="2"><path d="M7 13h9v8H7z" /><path d="M11 12V8h9v8h-3" /></g>}</svg>
    ))}
    <div className="flex-1 pr-1 pt-[3px] text-center text-[22px] leading-none tracking-[-0.006em] text-black">{title}</div>
  </div>
);
const PanelBar = ({ children }) => <div className="flex h-14 shrink-0 items-center border-t-2 border-b-[3px] border-t-white border-b-[#b0b0b0] bg-linear-to-b from-[#efefef] to-[#c9c9c9]">{children}</div>;
const P = ({ children, c = "w-[60px]" }) => <div className={`flex shrink-0 items-center justify-center ${c}`}>{children}</div>;
const Tri3 = () => <svg viewBox="0 0 15 18" className="h-[18px] w-[15px]"><path d="M0 0l15 9L0 18z" fill="#8a8a8a" /></svg>;

const browser = [["Favorites", <Star />, false], ["Project Home", <FolderS kind="map" />, true], ["Home", <FolderS kind="home" />, true], ["/", <FolderS />, true], ["/Volumes", <FolderS />, true], ["GeoPackage", <Box c="w-8 h-8" />, false]];
const layers = [
  ["Grenze_m", false, "line", "#9cb593"], ["Grenze", false, "line", "#f5b8c4"], ["de_ch_grenze_m", true, "line", "#a3cb94"], ["Buffered", true, "fill", "#3f5fbe"], ["de_ch_grenze", false, "line", "#f5b8c4"],
  ["Schweiz_Grenzen", false, "line", "#fdb45c"], ["Schweiz_isoliert", false, "fill", "#e77148"], ["ASTRA_Bruecken", false, "dot", "#c43c39"], ["DeutscheBrücken_Zust...", false, "dot", "#beb297"], ["ne_10m_admin_0_count...", true, "fill", "#91522d"],
];
const Check = ({ on }) => (
  <span className={`flex h-7 w-7 shrink-0 items-center justify-center rounded-md ${on ? "bg-[#3b99fc]" : "border-2 border-[#c3c3c3] bg-white"}`}>
    {on && <svg viewBox="0 0 28 28" className="h-7 w-7" fill="none"><path d="M7.500 14.500l5 6L20.500 7" stroke="#fff" strokeWidth="3" strokeLinecap="round" strokeLinejoin="round" /></svg>}
  </span>
);
const toolbox = ["Recently used", "Cartography", "Database", "File tools", "Graphics", "Interpolation", "Layer tools", "Network analysis", "Raster analysis", "Raster terrain analysis", "Raster tools", "Vector analysis", "Vector creation", "Vector general", "Vector geometry", "Vector overlay", "Vector selection", "Vector table", "GDAL", "GRASS", "Lat Lon tools", "SAGA"];
const toolIcon = (t) => ({ "Recently used": <Clock />, GDAL: <Gdal />, GRASS: <Grass />, "Lat Lon tools": <Pages c="w-8 h-8" />, SAGA: <Saga /> })[t] || <Qgis c="w-[28px] h-[28px]" />;

const LT = ({ children, chev }) => (
  <div className="flex h-[76px] w-full items-center">
    <div className={chev ? "ml-5" : "ml-3"}>{children}</div>{chev && <Chev c="mt-5 ml-[2px]" />}
  </div>
);

const MapView = () => (
  <svg viewBox="351.600 207 711 647.500" preserveAspectRatio="none" className="h-full w-[1306px] shrink-0 border-t-2 border-[#8a8a8a] bg-[#91522d]" fill="none" stroke="#1f1a17" strokeWidth=".7">
    <path d="M497 207L494 216 490 222 492 232 489 246 487 256 482 268 474 280 468 292 461 301 460 310 455 325 456 334 452 343 456 354 463 369 463 380 458 388 452 402" />
    <path d="M350 535l6 2 4 3-1 5 6 7 4 2M997 538l5-3 4 6 6 7 2 9 3 4-3 8 4 3 8 3 10-2 4-3 7 5 0 6-5 5 1 7-6 4-3 10 10 1 8-3 10-3" />
    <path d="M886 619l3 7-1 12-4 8-2 13-2 12 6 5 20 3 4-8 2-9-3-10-4-10-8-8 1-10 3-6M906 679l19 2 22 9 20 0 2 5-2 10 8 15 12 12 14 6 16 7 14 3 12-3 9-6 2-8 9-6" />
    <path d="M1006 854l3-14 6-8 16-6 10-8 12 1 4 6 6 10" />
    <path d="M462 399L480 400 497 401 520 400 545 404 562 396 567 390 578 378 602 355 612 350 648 333 682 330 705 334 728 339 757 354 770 365 782 371 802 373 830 375 850 379 870 388 890 399 922 414 950 434 975 456 985 470 993 487 997 515 994 540 985 565 968 590 950 604 930 613 900 619 872 615 848 605 828 594 795 575 770 580 740 578 725 591 705 597 680 601 640 604 602 601 580 608 550 612 520 610 490 615 462 616 430 607 405 595 385 577 370 555 361 530 355 500 360 470 370 447 378 437 400 417 425 406 440 402z" fill="#0e2ba3" />
    <path d="M700 333L725 341 742 351 757 363 770 381 780 400 786 425 789 450 787 475 785 505 775 532 767 550 750 569 740 579" />
    <path d="M456 503L472 499 470 506 461 509 465 513 478 515 490 514 500 509 508 500 524 501 529 504 528 511 558 510 568 507 574 499 586 492 604 490 618 493 622 501 632 503 640 498 648 494 660 492 666 495 665 500 680 499 681 492 685 484 684 478 676 479 664 485 656 487 645 480 637 476 637 467 644 460 648 446 658 441 671 438 675 431 683 432 685 441 692 443 697 434 703 441 708 448 706 456 711 459 711 466 721 465 722 457 729 460 740 467 737 470 746 478 757 480 767 478 776 472 800 474 818 475 832 480 897 519" stroke="#83b98f" strokeWidth=".8" />
  </svg>
);

/* ---------- dock ---------- */
const D = ({ children, n, dot = true }) => (
  <div className="flex h-full w-[118px] shrink-0 flex-col items-center pt-3">
    <svg viewBox="0 0 110 110" className="h-[110px] w-[110px] overflow-visible" fill="none">{children}
      {n && <g><circle cx="92" cy="21" r="20.500" fill="#e84e40" /><text x="92" y="29.500" textAnchor="middle" fontSize="25" fontFamily="Inter" fill="#fff">{n}</text></g>}
    </svg>
    {dot && <i className="mt-[8px] block h-2 w-2 rounded-full bg-[#4f1000]" />}
  </div>
);
const Dock = () => (
  <div className="absolute left-[166px] top-[1657px] flex h-[143px] w-[2548px] rounded-t-xl bg-[radial-gradient(circle_at_13%_120%,#d18c76_0,transparent_32%),radial-gradient(circle_at_75%_110%,#f29a40_0,transparent_26%),radial-gradient(circle_at_58%_80%,#df8f45_0,transparent_20%),linear-gradient(90deg,#97716a_0%,#bb7d55_14%,#a98262_30%,#b87f52_42%,#bf8a58_60%,#c08a55_78%,#8f7d5c_90%,#a27646_100%)] pl-[7px]">
    <D><defs><linearGradient id="fa" x2="0" y2="1"><stop stopColor="#5ed0fb" /><stop offset="1" stopColor="#2f6fe8" /></linearGradient></defs>
      <rect x="11" y="13" width="90" height="85" rx="5" fill="url(#fa)" /><path d="M57 13h39q5 0 5 5v75q0 5-5 5H65q-3-18-3-35H48q1-30 9-50z" fill="#f1f4f8" /><path d="M36 34v9M76 34v9" stroke="#222" strokeWidth="4" strokeLinecap="round" /><path d="M29 67q27 22 54 0" stroke="#222" strokeWidth="3" strokeLinecap="round" /><path d="M57 13Q48 38 48 63h14q0 18 3 35" stroke="#2d4a6b" /></D>
    <D><path d="M13 16L86 4l14 90-72 12z" fill="#2c2c2e" /><path d="M77 13l20 5 10 61-16 12z" fill="#3f93dc" /><path d="M30 80l57-1 4 11z" fill="#2873b8" /><path d="M28 41l6-4 38 28-1 8-6-2zM31 66L58 29l10-3-34 42z" fill="#3b8dd6" /><path d="M57 30l11-4 7 42-8 6z" fill="#2a72b8" /></D>
    <D n="3"><g transform="rotate(-7 50 55)"><rect x="17" y="13" width="72" height="90" fill="#fff" stroke="#fff" strokeWidth="5" strokeDasharray="3 2.500" /><rect x="22" y="18" width="62" height="80" fill="#4f93dc" /><path d="M22 66q30-10 62 8v24H22z" fill="#a9d0ef" /><path d="M26 22q10 4 16 14l8 24 10 4 12 8 12 10-14-1-12-6q-8 8-18 8l-8-8 10-10-8-14z" fill="#5a4230" /><path d="M26 22q10 4 14 14l6 20-8-2-8-16z" fill="#d8ccba" /><path d="M32 76l10-9 8 4-8 12z" fill="#b08a5c" /></g><circle cx="84" cy="82" r="22" stroke="#76604f" strokeWidth="2" opacity=".6" /><circle cx="84" cy="82" r="14" stroke="#4a6a90" strokeWidth="2" opacity=".7" /><FaApple x="76" y="73" size="16" color="#3a5c8a" /></D>
    <D><circle cx="55" cy="55" r="50" fill="#f9cf58" /><path d="M55 5a50 50 0 0 1 43.300 25H55L33 67 12 30A50 50 0 0 1 55 5z" fill="#d0574a" /><path d="M12 30l22 37 21 12-1 26A50 50 0 0 1 12 30z" fill="#47a062" /><path d="M54 105l23-42-22 17z" fill="#47a062" /><circle cx="55" cy="55" r="23" fill="#f3f3f3" /><circle cx="55" cy="55" r="18.500" fill="#4f86ec" /></D>
    <D><rect x="8" y="12" width="95" height="84" rx="5" fill="#101010" stroke="#cfd6da" strokeWidth="1.500" /><rect x="14" y="18" width="83" height="71" fill="#333" /><text x="20" y="37" fontSize="22" fontWeight="700" fontFamily="DejaVu Sans Mono" fill="#fff">&gt;_</text></D>
    <D dot={false}><circle cx="55" cy="55" r="47" fill="#9ea3a7" stroke="#dbe6ec" strokeWidth="3.500" /><path d="M20 35A40 40 0 0 1 90 35Q70 60 14 60z" fill="#c5d3dc" opacity=".7" /><path d="M83 26Q58 30 46 46l-13 3-12 10 14 2 11 12 2 17 10-14 2-15Q78 46 83 26z" fill="#3f4347" /><circle cx="65" cy="45" r="6" fill="#c8cfd4" /><path d="M35 67q-8 3-10 16 12-2 15-9z" fill="#3f4347" /></D>
    <D dot={false}><path d="M78 13l8-1 4 22-8 2z" fill="#d8d8d8" /><path d="M82 34l8-1 3 18-8 1z" fill="#6cb7e0" /><path d="M85 52l8-1 3 19-8 1z" fill="#6fcf6f" /><path d="M88 71l8-1 3 18-8 1z" fill="#f2b73a" /><path d="M14 14L76 4q4-1 5 4l12 80q0 5-5 6L28 105z" fill="#bf9a58" /><path d="M14 14l4-1 14 91-4 1z" fill="#96753c" /><circle cx="54" cy="50" r="24" stroke="#a07c42" strokeWidth="2" /><path d="M40 54q-6-16 6-20 10 1 7 18l4 8q-3 12-9 12-10-4-14-12zM57 54q-4-18 7-20 11 4 6 20l4 8q-4 10-13 10z" fill="#a9834a" /></D>
    <D n="2" dot={false}><defs><linearGradient id="as" x2="0" y2="1"><stop stopColor="#4cc3fa" /><stop offset="1" stopColor="#2160ea" /></linearGradient></defs><circle cx="55" cy="55" r="46" fill="url(#as)" stroke="#dfe3e8" strokeWidth="4" /><path d="M61 26L41 62M49 26l31 52M26 63h36M76 63h8M36 74l-3 5" stroke="#fff" strokeWidth="8" strokeLinecap="round" /></D>
    <D n="1"><rect x="8" y="10" width="94" height="89" rx="4" fill="#97a0a6" /><circle cx="55" cy="55" r="38" fill="#2b2d30" /><g transform="translate(55 55)" stroke="#a9a9a9">{gearTeeth(36, 29, 33, 2.6)}<circle r="27" strokeWidth="6" fill="#3c3e40" /><path d="M0 0h26M0 0l-13 23M0 0l-13-23" strokeWidth="6" /><circle r="5" fill="#ccc" stroke="none" /></g></D>
    <D dot={false}><path d="M22 6q14-5 22 3 30-6 48 16 9 16 7 31 9 14 3 30-8 18-28 17-8-1-12-4-26 4-44-18-9-16-6-32-8-12-5-25 5-14 15-18z" fill="#fff" stroke="#2f76ad" strokeWidth="8" /><path d="M72 38q-2-11-17-11t-17 11q0 10 16 14t19 15q-1 15-18 15-15 0-19-12" stroke="#2f76ad" strokeWidth="12.500" strokeLinecap="round" /></D>
    <D dot={false}><path d="M26 9l29-3 31 3 20 31-51 63L3 40z" fill="#f5a030" /><path d="M26 9L3 40h22zM86 9l20 31H86z" fill="#f39c2e" /><path d="M26 9l29-3-30 34zM55 6l31 3v31z" fill="#f9cd38" /><path d="M55 6L25 40h61z" fill="#fbe79a" /><path d="M25 40h61l-31 63z" fill="#f6b23a" /><path d="M3 40h22l30 63zM106 40H86l-31 63z" fill="#ea7b30" /></D>
    <D><circle cx="55" cy="55" r="48" fill="#eceefa" /><path d="M28 22l13 5q14-3 27 0l13-5q4 6 3 15 4 7 4 18-1 17-21 20 1 4 1 10v17q-12 4-26 0V86q0-6 1-10-20-3-21-21 0-11 5-18-2-9 1-15z" fill="#552a7c" /><path d="M18 76q8 2 8 8 4 5 16 4" stroke="#552a7c" strokeWidth="4" /></D>
    <D><circle cx="67" cy="22" r="17" stroke="#8d8d8d" strokeWidth="4" /><path d="M50 60l14 0-3 44-6 2-5-6zM36 56l14 6-14 40-9-3zM66 34l18-2 3 24 10 38-7 8-18-42z" fill="#a9afb2" stroke="#888" /><circle cx="62" cy="52" r="20" fill="#b9bec1" /><circle cx="42" cy="45" r="23" fill="#f28c2e" stroke="#c9cdd0" strokeWidth="3" /><circle cx="48" cy="27" r="6" fill="#b07a48" stroke="#ddd" strokeWidth="2" /><path d="M34 47l13 4-3 11-13-4z" fill="#fff" /><path d="M44 48q2-10 7-8 3 2 1 7" stroke="#fff" strokeWidth="2.500" /></D>
    <D><rect x="50" y="18" width="53" height="76" fill="#fdfdfd" /><path d="M62 30h33M62 41h33M62 51h33M62 61h33M62 71h33M62 81h33" stroke="#2f3640" strokeWidth="3.500" /><path d="M76 30h12M66 41h14M78 51h12M70 61h12M66 71h10M74 81h12" stroke="#6b93cc" strokeWidth="3.500" /><path d="M6 18L63 7v97L6 94z" fill="#3b66b0" /><text x="15" y="70" fontSize="36" fontWeight="700" fontFamily="Inter" fill="#fff">W</text></D>
    <D dot={false}><rect x="0" y="0" width="110" height="110" fill="#1a1b1d" /><path d="M33 22q-22 12-14 30t30-2q20-20 28-26 10-6 8 2-8 14-22 16M75 18q-10-6-22 8-20 26-12 40 6 8 16-6M50 60q8 20-10 30-22 6-24-14 4-16 14-10 6 8-2 14" stroke="#fff" strokeWidth="3.500" /><text x="52" y="84" fontSize="66" fontStyle="italic" fontFamily="Liberation Serif" fill="#fff">φ</text></D>
    <D><path d="M15 16l70-12 16 88-72 13z" fill="#fafafa" /><path d="M18 28l70-12M20 36l70-12M21 44l70-12M22 52l70-12M24 60l70-12M25 68l70-12M26 76l70-12M28 84l70-12M29 92l70-12" stroke="#c3c8d0" strokeWidth="1.300" /><path d="M23 14l12 90" stroke="#f2b5b5" /><path d="M93 5l6 1-22 88-7 10 1-12z" fill="#a8bccb" stroke="#7a8a98" /></D>
    <D><circle cx="55" cy="55" r="46" fill="#1a1a1a" /><FaSpotify x="6" y="6" size="98" color="#66d46f" /></D>
    <D n="3"><g transform="rotate(-9 55 60)"><rect x="12" y="18" width="82" height="84" rx="3" fill="#59636b" /><rect x="16" y="14" width="78" height="80" rx="2" fill="#fafafa" /><path d="M16 14h78v25H16z" fill="#d94f48" /><text x="52" y="34" textAnchor="middle" fontSize="18" fontFamily="Inter" textLength="32" lengthAdjust="spacingAndGlyphs" fill="#fff">FEB</text><text x="55" y="83" textAnchor="middle" fontSize="49" fontWeight="300" fontFamily="Inter" textLength="46" lengthAdjust="spacingAndGlyphs" fill="#222">21</text></g></D>
    <D><defs><linearGradient id="md" x2="0" y2="1"><stop stopColor="#6bd3d8" /><stop offset="1" stopColor="#3d88cf" /></linearGradient></defs><circle cx="55" cy="55" r="46" fill="url(#md)" stroke="#e6edf2" strokeWidth="4" /><text x="24" y="68" fontSize="36" fontWeight="900" fontFamily="Inter" fill="#fff">M</text><path d="M77 41v20" stroke="#fff" strokeWidth="8" /><path d="M65 54h24L77 69z" fill="#fff" /></D>
    <D><circle cx="54" cy="55" r="41" stroke="#7da638" strokeWidth="20" strokeDasharray="224 34" transform="rotate(66 54 55)" /><path d="M45 48h16l15 13H58v12L45 62z" fill="#e9762f" /><path d="M58 61h20l6 6H66v14l-8-10z" fill="#f3df5a" /><path d="M66 66h18l23 26v15H92L66 80z" fill="#5e9638" /><path d="M66 66h18l23 26v14z" fill="#8fb56c" /></D>
    <div className="ml-5 mt-8 h-[106px] w-[2px] bg-[#6d4f24]/70" />
    <svg viewBox="0 0 90 110" className="ml-[44px] mt-3 h-[106px] w-[82px]" preserveAspectRatio="none" fill="none"><path d="M8 20l10-10 12-5 12 8 12-9 14 6 10 14-8 12H16z" fill="#f0f0f0" stroke="#888" /><path d="M26 18l8-8 6 12zM48 20l8-14 8 16zM20 24l10 8 8-8z" fill="#5a6a78" /><path d="M36 18l8-2 2 8z" fill="#3fb5d8" /><path d="M60 16l4 12 6-10z" fill="#a85a3a" /><path d="M6 18q39 16 77 0L74 98q-2 8-30 8T16 98z" fill="#e4e4e6" opacity=".93" /><path d="M6 18q39 16 77 0" stroke="#fff" strokeWidth="2" /><path d="M22 34l6 62M66 34l-5 62" stroke="#fff" strokeWidth="4" opacity=".6" /></svg>
  </div>
);

/* ---------- menus ---------- */
const menuItems = [["Project", "w-[128px]"], ["Edit", "w-[86px]"], ["View", "w-[100px]"], ["Layer", "w-[108px]"], ["Settings", "w-[144px]"], ["Plugins", "w-[113px]"], ["Vector", "w-[122px]"], ["Raster", "w-[121px]"], ["Database", "w-[161px]"], ["Web", "w-[95px]"], ["MMQGIS", "w-[153px]"], ["Processing", "w-[179px]"], ["Window", "w-[140px]"], ["Help", "w-[122px]"]];
const MenuBar = () => (
  <div className="absolute inset-x-0 top-0 z-20 flex h-[45px] items-center border-b border-[#5e6a78] bg-linear-to-r from-[#e3ebf6] via-[#e7f0f8] to-[#eef2f8] text-[28px] leading-none tracking-[-0.018em] text-[#2b2f36]">
    <FaApple className="ml-[38px] h-[34px] w-[34px]" />
    <div className="ml-[36px] w-[133px] font-bold tracking-[0.002em]">QGIS 3</div>
    {menuItems.map(([t, w]) => t === "Vector"
      ? <div key={t} className={`flex h-[44px] items-center bg-[#4a8ef4] pl-[18px] text-white ${w}`}>{t}</div>
      : <div key={t} className={`${w} ${t === "Raster" ? "ml-[18px]" : ""} whitespace-nowrap`}>{t}</div>)}
    <svg viewBox="0 0 36 24" className="-ml-px h-6 w-9 shrink-0"><path d="M2 22q-4-8 3-12Q8-1 17 1q7 1 9 7l-5 1q-5 1-6 6-6 1-6 9z" fill="#33373e" /><path d="M13 24q-3-7 4-8 2-7 9-5 4 2 4 5 6 1 6 5 0 3-3 3z" fill="#33373e" /></svg>
    <svg viewBox="0 0 32 28" className="ml-3 h-7 w-8 shrink-0"><path d="M7 0h18l7 9-16 19L0 9z" fill="#2f3331" /></svg>
    <svg viewBox="0 0 32 32" className="ml-5 h-8 w-8 shrink-0" fill="none" stroke="#b5b9c0" strokeWidth="3"><path d="M18 2A14 14 0 1 0 30 20M16 8a8 8 0 1 0 8 8M16 13v3h3" /><path d="M22 4q8 4 8 12" /></svg>
    <FaBluetoothB className="ml-[33px] h-[30px] w-5" />
    <svg viewBox="0 0 42 30" className="ml-[30px] h-[30px] w-[42px] shrink-0" fill="none" stroke="#2f333a" strokeWidth="3"><path d="M2 10q19-17 38 0M8 17q13-11 26 0M14 23q7-6 14 0" /><circle cx="21" cy="27" r="2.500" fill="#2f333a" stroke="none" /></svg>
    <div className="ml-[22px] w-[71px] text-[24px]">100%</div>
    <svg viewBox="0 0 46 26" className="h-[26px] w-[46px] shrink-0" fill="none"><rect x="1.500" y="1.500" width="38" height="23" rx="4" stroke="#2f333a" strokeWidth="2" /><rect x="5" y="5" width="31" height="16" fill="#2f333a" /><path d="M24 1l-10 13h6l-3 11 12-14h-7z" fill="#2f333a" stroke="#eef2f8" strokeWidth="2" /><path d="M42 9q4 4 0 8z" fill="#2f333a" /></svg>
    <svg viewBox="0 0 34 32" className="ml-[29px] h-8 w-[34px] shrink-0"><rect width="26" height="26" fill="#b3121a" /><path d="M10.500 5h5v5.500H21v5h-5.500V21h-5v-5.500H5v-5h5.500z" fill="#fff" /><rect x="14" y="20" width="18" height="4" fill="#111" /><rect x="14" y="24" width="18" height="4" fill="#c22" /><rect x="14" y="28" width="18" height="4" fill="#f2c12e" /></svg>
    <div className="ml-[37px] w-[210px] whitespace-nowrap tracking-[-0.01em]">Thu 9:51 AM</div>
    <Loupe c="w-[30px] h-[30px]" s="#2b2f36" />
    <svg viewBox="0 0 36 22" className="ml-[31px] h-[22px] w-9 shrink-0" fill="none" stroke="#2b2f36" strokeWidth="3.500"><path d="M0 2h4M8 2h28M0 11h4M8 11h22M0 20h4M8 20h28" /></svg>
  </div>
);
const Geo = ({ k }) => {
  const f = "#7f94a8", s = "#5f7b90", g = "#bccab8";
  const sq = (fill, dash) => <rect x="1" y="10" width="18" height="18" fill={fill} stroke={dash ? "#555" : s} strokeWidth="1.400" strokeDasharray={dash ? "2 1.500" : ""} />;
  const ci = (fill, dash) => <circle cx="19.500" cy="10.500" r="9.500" fill={fill} stroke={dash ? "#555" : s} strokeWidth="1.400" strokeDasharray={dash ? "2 1.500" : ""} />;
  const lens = (fill) => <path d="M19 10v10A9.500 9.500 0 0 1 10 10z" fill={fill} stroke={s} />;
  const union = (fill) => <path d="M1 10h9a9.500 9.500 0 1 1 9 10v8H1z" fill={fill} stroke={s} strokeWidth="1.400" />;
  return (
    <svg viewBox="0 0 30 29" className="h-[29px] w-[30px]" fill="none">
      {k === 0 && <g><path d="M6 1h20q3 0 3 3v6q0 3-3 3H14v13q0 3-3 3H5q-3 0-3-3V5q0-4 4-4z" fill={f} stroke={s} strokeWidth="1.400" /><path d="M25 7H8v16" stroke="#555" strokeWidth="1.600" /><path d="M25 5H6v18" stroke="#b7cc96" strokeWidth="1.500" /></g>}
      {k === 1 && <g>{sq(g, 1)}{ci(g, 1)}{lens(f)}</g>}
      {k === 2 && <g><path d="M8 1h20v11L12 29 2 18V8z" fill={f} stroke="#546a7d" strokeWidth="1.500" /><path d="M27 4H10L5 9v9l6 8" stroke="#b7cc96" strokeWidth="1.600" /></g>}
      {k === 3 && <g>{sq(f)}{ci(g, 1)}</g>}
      {k === 4 && union("#8095aa")}
      {k === 5 && <g>{sq("#bac3b3", 1)}{ci("#bac3b3", 1)}{lens("#71869a")}</g>}
      {k === 6 && <g>{sq("#68798a")}{ci("#68798a")}{lens("#b9bfa9")}</g>}
      {k === 7 && <g>{sq("#676f7b")}{ci("#676f7b")}{lens("#676f7b")}</g>}
      {k === 8 && union("#67686f")}
    </svg>
  );
};
const vec = ["Beeline", "Geoprocessing Tools", "Geometry Tools", "Analysis Tools", "Data Management Tools", "Research Tools"];
const sub = ["Buffer...", "Clip...", "Convex Hull...", "Difference...", "Dissolve...", "Intersection...", "Symmetrical Difference...", "Union...", "Eliminate Selected Polygons..."];

const field = "flex items-center border-2 border-[#a8a8a8] bg-[#fbfbfb]";
const Stepper = () => <svg viewBox="0 0 23 42" className="h-[42px] w-[23px] shrink-0" fill="none"><rect x=".5" y=".5" width="22" height="41" rx="8" fill="#fff" stroke="#bbb" /><path d="M6 15l5.500-6 5.500 6M6 27l5.500 6 5.500-6" stroke="#333" strokeWidth="2.600" /></svg>;
const btn = "flex items-center justify-center border-2 border-[#adadad] bg-[#ebebeb]";

export default function App() {
  return (
    <div className="relative h-[1800px] w-[2880px] overflow-hidden bg-[#2b1d14] font-[Inter,'DejaVu_Sans',sans-serif] text-[26px] leading-none text-black">
      {/* wallpaper */}
      <svg className="absolute inset-x-0 top-[1630px] h-[170px] w-full">
        <defs>
          <filter id="w1" x="0" y="0" width="1" height="1" colorInterpolationFilters="sRGB"><feTurbulence type="fractalNoise" baseFrequency="0.014 0.22" numOctaves="4" seed="4" /><feColorMatrix values="1.300 0 0 0 -.32  1.050 0 0 0 -.29  1 0 0 0 -.29  0 0 0 0 1" /></filter>
          <filter id="w2" x="0" y="0" width="1" height="1" colorInterpolationFilters="sRGB"><feTurbulence type="fractalNoise" baseFrequency="0.02 0.2" numOctaves="4" seed="9" /><feColorMatrix values="2.200 0 0 0 -.68  1.400 0 0 0 -.44  .5 0 0 0 -.17  0 0 0 0 1" /></filter>
        </defs>
        <rect width="180" height="170" filter="url(#w1)" /><rect x="2700" width="180" height="170" filter="url(#w2)" />
      </svg>
      {/* windows behind */}
      <div className="absolute left-0 top-[44px] h-[1597px] w-[80px] overflow-hidden rounded-b-xl bg-linear-to-b from-[#ddd] to-[#e2e2e2]">
        <div className="flex h-[1554px] flex-col overflow-hidden rounded-xl bg-[#101010] text-[22px] text-[#8a8a8a]">
          <div className="ml-[38px] mt-[38px] h-6 w-6 shrink-0 rounded-full bg-[#c9c9c9]" />
          <div className="h-[232px] shrink-0 pl-[50px] pt-9"><div>P</div><div className="pt-[70px]">F</div><div className="pt-6">S</div></div>
          {"TTTT\\DTTTCLCFD".split("").map((t, i) => <div key={i} className="flex h-16 shrink-0 items-center pl-[48px]">{t}</div>)}
          <div className="mt-[16px] h-px w-full shrink-0 bg-[#333]" />
          <div className="ml-[47px] mt-11 h-9 w-9 shrink-0 rounded-full border-2 border-[#8a8a8a]" />
          <div className="mt-12 flex-1 bg-[#232323] pl-8 pt-8"><div className="flex h-[112px] w-10 items-end bg-linear-to-b from-[#3a3a3a] via-[#555] to-[#bbb]"><svg viewBox="0 0 22 90" className="mb-2 h-[84px] w-[22px]"><path d="M22 4q-4 4-2 10l-8 6-6 22-4 6 3 3 7-8v22l-12 6v8l14-2-1 13h9z" fill="#0b0b0b" /></svg></div></div>
        </div>
      </div>
      <div className="absolute right-0 top-[1640px] flex h-[54px] w-[180px] items-center gap-9 bg-linear-to-b from-[#444] to-[#8d8d8d] pl-[16px] pt-2">
        <svg viewBox="0 0 28 32" className="h-8 w-7" stroke="#333" strokeWidth="2.500"><path d="M0 4h28M0 12h20M0 20h26M0 28h20" /></svg>
        <i className="h-1.5 w-4 bg-[#333]" /><i className="-ml-5 h-3 w-20 rounded-full bg-[#4b4b4b]" />
      </div>
      <Dock />

      {/* main window */}
      <div className="absolute left-[54px] top-[45px] flex h-[1612px] w-[2826px] flex-col overflow-hidden rounded-[10px] bg-[#ececec] shadow-[0_8px_36px_rgba(0,0,0,.55)]">
        <div className="flex h-[45px] shrink-0 items-center border-b-2 border-[#b3afb3] bg-linear-to-b from-[#e9e6e9] to-[#d2d0d2] pl-4">
          <i className="h-6 w-6 rounded-full border border-[#d9574d] bg-[#ee6a5f]" /><i className="ml-4 h-6 w-6 rounded-full border border-[#dba23c] bg-[#f5bd4f]" /><i className="ml-4 h-6 w-6 rounded-full border border-[#4cae3f] bg-[#61c454]" />
          <div className="ml-[1202px] w-[210px] pt-1 text-[26px] tracking-[-0.002em] text-[#3a3a3a]">project2 - QGIS</div>
        </div>
        <Bar>
          <Grip /><Slot c="w-[76px] pl-0.5"><NewDoc /></Slot><Slot><Folder /></Slot><Slot><Ico><Disk /></Ico></Slot><Slot><Ico><Disk /><PenB x={27} y={27} /></Ico></Slot><Slot><Layout /></Slot><Slot><LayoutMgr /></Slot><Slot><StyleMgr /></Slot>
          <Grip c="w-[19px] pl-[14px]" />
          <Slot><div className="flex h-[67px] w-[68px] items-center justify-center rounded-t-lg bg-linear-to-b from-[#d2d2d2] to-[#b4b4b4] pl-1.5"><Hand /></div></Slot>
          <Slot><PanSel /></Slot><Slot><Mag plus /></Slot><Slot><Mag /></Slot>
          <div className="w-[953px] shrink-0" />
          <SlotV c="w-[91px]"><Cursor /></SlotV><SlotV><Bars /></SlotV><Slot><Desel /></Slot><Slot><Table /></Slot><Slot><Abacus /></Slot>
          <Slot><div className="flex h-[67px] w-[68px] items-center justify-center rounded-t-lg bg-linear-to-b from-[#d2d2d2] to-[#b4b4b4]"><Gear /></div></Slot>
          <Slot><Sigma /></Slot><SlotV c="w-[94px] ml-1"><Ruler /></SlotV><Slot c="w-[76px] -ml-0.5"><Tip /></Slot><SlotV c="w-[92px]"><TextAnn /></SlotV>
        </Bar>
        <Bar>
          <Grip /><Slot><AddData /></Slot><Slot><Box badge /></Slot><Slot><VLine><StarB x={28} y={29} /></VLine></Slot><Slot><Feather><StarB x={28} y={29} /></Feather></Slot><Slot><Chip /></Slot>
          <Grip c="w-[19px] pl-[14px]" />
          <Slot><Ico o="opacity-60"><Pen x={-4} /><Pen x={3} /><Pen x={10} /><path d="M36 42l8 8 8-8" stroke="#333" strokeWidth="2.500" /></Ico></Slot>
          <Slot><Ico><Pen col="#f0dc3c" dark="#7a6a10" /></Ico></Slot>
          <Slot><Ico o="opacity-60"><Disk o=".7" /><g transform="translate(20 15) scale(.7)"><Pen /></g></Ico></Slot>
          <Slot><Blob><StarB x={25} y={28} /></Blob></Slot>
          <SlotV c="w-[94px] pl-[20px]" s="#777"><NodeTool /></SlotV><Slot><div className="opacity-60"><Bars pencil /></div></Slot>
          <div className="w-[930px] shrink-0" />
          <Slot><Abc><RotB x={28} y={26} /></Abc></Slot><Slot><Abc><Badge fill="#c4a000" x={28} y={26}><path d="M6 15l8-10" stroke="#fff" strokeWidth="3.500" /></Badge></Abc></Slot>
          <Grip c="w-[26px] pl-[13px]" /><Grip c="w-[19px] pl-[13px]" /><Slot><Python prompt c="w-[42px] h-[42px]" /></Slot>
        </Bar>
        <Bar>
          <Grip /><Slot><Tri /></Slot><SlotV c="w-[94px] pl-[24px]" s="#777"><Blob><ArrB x={26} y={28} /></Blob></SlotV>
          <Slot><Blob><RotB x={27} y={28} /></Blob></Slot>
          <Slot><Ico o="opacity-50"><ellipse cx="16" cy="15" rx="14" ry="14" fill="#8fbf8f" stroke="#555" strokeWidth="2" /><path d="M22 18h17l8 14-8 14H22l-8-14z" fill="#a9c6df" stroke="#557" strokeWidth="2" /><path d="M14 10l17 21M31 23v9h-8" stroke="#333" strokeWidth="2" /></Ico></Slot>
          <Slot><Blob ring><StarB x={26} /></Blob></Slot><Slot><Blob fill="#bbb" child><StarB x={26} /></Blob></Slot><Slot><Blob fill="#bbb" inner><StarB x={26} /></Blob></Slot><Slot><Blob ring><XB x={27} /></Blob></Slot><Slot><Blob fill="#bbb" child><XB x={27} /></Blob></Slot>
          <Slot><Blob><path d="M3 20h16q0 20-8 24Q3 46 3 20z" fill="#f0cf50" stroke="#8a7a30" strokeWidth="2" /></Blob></Slot>
          <Slot><Ico o="opacity-60"><path d="M30 2q14 0 14 10 0 8-9 14-3 12-12 18-14 6-20-6-2-10 10-17 6-3 6-8 0-10 11-11z" fill="#e9c94d" stroke="#666" strokeWidth="2" /><path d="M31 8q8 0 8 6-2 7-8 10-3 10-10 14-10 3-13-4 0-6 9-11 6-4 6-9 2-6 8-6z" fill="#9fcf9f" stroke="#b89a2a" /></Ico></Slot>
          <Slot><Blob><RotB x={27} y={28} /></Blob></Slot>
          <Slot c="w-[70px]"><span className="mt-10 h-3 w-3 rounded-full border-2 border-[#c98080]" /></Slot><Slot c="w-[76px]"><span className="mt-10 h-3 w-3 rounded-full border-2 border-[#c98080]" /></Slot>
          <Slot c="w-[76px] pl-8"><span className="mt-10 h-2 w-9 bg-[#a5a5a5]" /></Slot><Slot c="w-[76px] pl-8"><span className="mt-10 h-2 w-5 bg-[#a5a5a5]" /></Slot>
        </Bar>
        <Bar>
          <Grip /><Slot c="w-[76px] pl-0.5"><Book /></Slot><Grip c="w-[19px] pl-[14px]" /><div className="w-[1777px] shrink-0" /><Grip c="w-[17px] pl-[12px]" />
          <Slot><Pages /></Slot><Slot><MapPin /></Slot><Slot><Mag2 /></Slot><Slot><Mag2 more /></Slot><Slot><XY /></Slot><Slot><Extent /></Slot><Grip c="w-[19px] pl-[13px]" /><Slot><Bee /></Slot>
        </Bar>

        <div className="flex h-[1193px] shrink-0 border-b-2 border-[#6f6f6f]">
          <div className="flex w-[90px] shrink-0 flex-col border-r-2 border-[#a9a9a9] bg-linear-to-r from-[#f1f1f1] to-[#c6c6c6]">
            <div className="flex h-[21px] shrink-0 gap-[9px] pl-[15px] pt-[17px]">{[0, 1, 2, 3, 4].map((i) => <i key={i} className="h-[3px] w-[3px] rounded-full bg-[#8f8f8f]" />)}</div>
            <LT><VLine><PlusB x={29} y={27} /></VLine></LT><LT><Raster /></LT><LT><Comma /></LT><LT><Feather><PlusB x={29} y={28} /></Feather></LT><LT><VBox /></LT>
            <LT chev><Elephant /></LT><LT chev><Globe /></LT><LT><Globe kind="wms" /></LT><LT chev><VLine globe><PlusB x={30} /></VLine></LT><LT chev><VLine><StarB x={30} /></VLine></LT>
          </div>

          <div className="flex w-[497px] shrink-0 flex-col border-r-2 border-[#9c9c9c]">
            <PanelHead title="Browser" />
            <PanelBar><P c="w-[60px] -ml-0.5"><AddGrp /></P><P><Refresh /></P><P><Funnel /></P><P><Tree up /></P><P><Info /></P></PanelBar>
            <div className="h-[240px] shrink-0 overflow-hidden border-2 border-[#a3a3a3] bg-white">
              {browser.map(([t, ic, a]) => (
                <div key={t} className="flex h-10 items-center pl-[15px]"><div className="w-[15px]">{a && <Tri3 />}</div><div className="ml-[12px] flex w-[48px] justify-center">{ic}</div><div className="ml-[4px]">{t}</div></div>
              ))}
            </div>
            <PanelHead title="Layers" />
            <PanelBar><P c="w-[60px] -ml-0.5"><Brush /></P><P><Clips /></P><P><Eye /></P><P><Funnel /></P><P c="w-[79px] pl-4"><Eps /><Chev c="mt-4 scale-75" /></P><P><Tree /></P><P><Tree up /></P><P><AddGrp red /></P></PanelBar>
            <div className="h-[545px] shrink-0 border-2 border-[#a3a3a3] bg-white">
              {layers.map(([t, on, k, col]) => (
                <div key={t} className={`flex h-11 items-center pl-[54px] ${t === "Buffered" ? "bg-[#d4d4d4]" : ""}`}>
                  <Check on={on} />
                  <svg viewBox="0 0 32 32" className="ml-[26px] h-8 w-8 shrink-0">{k === "line" ? <path d="M0 17h32" stroke={col} strokeWidth="2.200" /> : k === "fill" ? <rect x="1" y="1" width="30" height="30" fill={col} stroke="#000" strokeOpacity=".35" strokeWidth="2" /> : <circle cx="16" cy="16" r="4.500" fill={col} stroke="#232323" strokeWidth="1.800" />}</svg>
                  <div className={`ml-[12px] whitespace-nowrap font-bold ${on ? "tracking-[0.003em] text-black" : "italic tracking-[0.008em] text-[#a0a0a4]"} ${t === "Buffered" ? "mt-1 border-b-2 border-black pb-0.5" : ""}`}>{t}</div>
                  {t === "Buffered" && <svg viewBox="0 0 32 28" className="ml-auto mr-1.5 h-7 w-8" fill="none" stroke="#7f878c"><path d="M5 0v28M11 0v28M17 0v28M23 0v28M28 0v28" strokeWidth="1.800" /><rect x="1.500" y="5" width="29" height="18" rx="3" fill="#d4d4d4" strokeWidth="2.600" /></svg>}
                </div>
              ))}
            </div>
            <PanelHead title="Zoom to Lat Lon" />
            <div className="flex items-center pl-[24px] pt-[26px]">
              <div className="w-[334px] tracking-[-0.002em] whitespace-nowrap">Enter 'Latitude, Longitude'</div>
              <div className={`h-[52px] w-[52px] ${btn}`}><Mag plus c="w-8 h-8" /></div>
              <div className={`ml-[10px] h-[52px] w-[52px] ${btn}`}><svg viewBox="0 0 26 20" className="h-5 w-[26px]"><path d="M8 0h18v20H8L0 10z" fill="#8d8d8d" /><path d="M11 5l10 10M21 5L11 15" stroke="#fff" strokeWidth="2.400" /></svg></div>
            </div>
            <div className="ml-[25px] mt-5 h-[41px] w-[446px] border-2 border-[#b4b4b4] bg-white" />
          </div>

          <div className="w-[4px] shrink-0 border-r border-[#bbb] bg-[#e4e4e4]" />
          <MapView />
          <div className="w-[5px] shrink-0 border-x-2 border-[#9a9a9a] bg-[#e4e4e4]" />

          <div className="flex flex-1 flex-col">
            <PanelHead title="Processing Toolbox" />
            <PanelBar>
              <P><Gears /></P><P><div className="relative"><Python c="w-[30px] h-[30px]" /><Chev c="absolute -right-2 bottom-[-6px]" /></div></P><P c="w-[60px] -ml-0.5"><Clock /></P><P><Log /></P>
              <div className="ml-2 h-11 border-l-[3px] border-dotted border-[#8a8a8a]" /><P c="w-[60px] ml-2.5"><Note /></P><div className="ml-2 h-11 border-l-[3px] border-dotted border-[#8a8a8a]" /><P c="w-[60px] ml-2.5"><WrenchI /></P>
            </PanelBar>
            <div className="flex h-[42px] shrink-0 items-center border-2 border-[#b4b4b4] bg-white pl-[15px] text-[26px] text-[#7f7f7f]"><Loupe c="w-6 h-6" /><span className="ml-[15px] pt-1 tracking-[-0.01em]">Search...</span></div>
            <div className="flex-1 border-2 border-[#a3a3a3] bg-white">
              {toolbox.map((t) => (
                <div key={t} className="flex h-10 items-center pl-[15px]"><Tri3 /><div className="ml-[13px] flex w-[44px] justify-center">{toolIcon(t)}</div><div className="ml-[7px] whitespace-nowrap tracking-[-0.001em]">{t}</div></div>
              ))}
            </div>
          </div>
        </div>

        <div className="flex flex-1 items-center bg-linear-to-b from-[#e8e8e8] to-[#a6a6a6] text-[23.500px] tracking-[-0.024em] whitespace-nowrap">
          <div className={`ml-[9px] h-[41px] w-[436px] pl-3.5 text-[26px] tracking-[-0.008em] text-[#777] ${field}`}><Loupe c="w-6 h-6" /><span className="ml-4 pt-1">Type to locate (⌘K)</span></div>
          <div className="ml-[573px] w-[121px]">Coordinate</div>
          <div className={`h-[40px] w-[204px] pl-1 ${field}`}>798936,6024540</div>
          <div className={`ml-0.5 h-[52px] w-[52px] ${btn}`}><Ico c="w-9 h-9"><circle cx="30" cy="34" r="10" stroke="#a99" strokeWidth="5" /><circle cx="27" cy="33" r="9" stroke="#111" strokeWidth="3" fill="#fff" /><circle cx="28" cy="35" r="2.500" fill="#111" /><rect x="9" y="4" width="15" height="27" rx="6" transform="rotate(-18 16 18)" stroke="#111" strokeWidth="3.500" fill="#fff" /><path d="M13 8l7 18" stroke="#111" strokeWidth="4.500" /><path d="M33 13l3-3M38 12l4-5M34 18l6-2M4 34l3 2M6 40l3-1" stroke="#111" strokeWidth="2.500" /></Ico></div>
          <div className="ml-[18px] w-[67px] -mt-1">Scale</div>
          <div className="flex h-[41px] w-[208px] overflow-hidden rounded-r-lg border border-[#9b9b9b] bg-[#fbfbfb]"><div className="flex flex-1 items-center pl-1.5">1:3054684</div><div className="flex w-[35px] items-center justify-center bg-linear-to-b from-[#6cb3fa] to-[#0a72f5]"><Chev s="#fff" /></div></div>
          <div className={`ml-[23px] h-[52px] w-[52px] ${btn}`}><svg viewBox="0 0 26 32" className="h-8 w-[26px]" fill="none"><path d="M5 16V9q0-8 8-8t8 8v7" stroke="#888" strokeWidth="3" /><rect x="1" y="15" width="24" height="16" rx="2" fill="#5f5f5f" /></svg></div>
          <div className="ml-[6px] w-[107px] tracking-[-0.01em]">Magnifier</div>
          <div className={`h-[38px] w-[148px] pl-0.5 ${field}`}>100%</div><div className="ml-[4px]"><Stepper /></div>
          <div className="ml-[22px] w-[108px]">Rotation</div>
          <div className={`h-[36px] w-[144px] pl-0.5 ${field}`}>0.0 °</div><div className="ml-[6px]"><Stepper /></div>
          <div className="ml-[13px]"><Check on /></div><div className="ml-[8px] w-[78px]">Render</div>
          <div className={`h-[59px] w-[192px] ${btn}`}><svg viewBox="0 0 32 28" className="h-7 w-8" fill="#a8a8a8" stroke="#5c5c5c" strokeWidth="2"><path d="M7 1h18l6 12q-3 14-15 14T1 13zM1 13h30M4 7h24M5 20h22" /><ellipse cx="16" cy="14" rx="7" ry="13" fill="none" /></svg><span className="ml-2">EPSG:3395</span></div>
          <div className={`ml-3 h-[59px] w-[52px] ${btn}`}><svg viewBox="0 0 34 30" className="h-[30px] w-[34px]"><ellipse cx="16" cy="13" rx="16" ry="13" fill="#5a5a5a" /><path d="M16 24l14 6-5-10z" fill="#5a5a5a" /><g fill="#fff"><circle cx="9" cy="13" r="2.300" /><circle cx="16" cy="13" r="2.300" /><circle cx="23" cy="13" r="2.300" /></g></svg></div>
          <svg viewBox="0 0 44 44" className="ml-[19px] h-11 w-11 shrink-0"><path d="M2 14h10q-4-8 3-8t4 8h12v8q8-3 6 4-1 3-6 4v12H2V32q6 1 6-4t-6-4z" fill="#9c9c9c" stroke="#666" strokeWidth="2" /><path d="M34 1l3 7 6 1-4 5 1 7-6-3-6 3 1-7-5-5 7-1z" fill="#f2f2f2" stroke="#888" strokeWidth="1.500" /></svg>
        </div>
      </div>

      <MenuBar />
      {/* vector menu */}
      <div className="absolute left-[920px] top-[44px] z-30 h-[244px] w-[472px] rounded-b-xl bg-[#ebedef] pt-2 text-[28px] tracking-[-0.017em] text-[#2c2e31] shadow-[0_8px_24px_rgba(0,0,0,.4),0_0_1px_#000]">
        {vec.map((t, i) => (
          <div key={t} className={`flex h-[38px] items-center justify-between pb-px pl-[42px] pr-6 ${i === 1 ? "bg-[#4f90f5] text-white" : ""}`}>{t}
            <svg viewBox="0 0 18 20" className="h-5 w-[18px]"><path d="M0 0l18 10L0 20z" fill={i === 1 ? "#fff" : "#2c2e31"} /></svg></div>
        ))}
      </div>
      <div className="absolute left-[1392px] top-[82px] z-30 h-[394px] w-[506px] rounded-xl bg-linear-to-b from-[#ebedec] via-[#eaebe9] via-55% to-[#e6cdc0] pt-2 text-[28px] tracking-[-0.014em] text-[#2c2a2a] shadow-[0_8px_24px_rgba(0,0,0,.4),0_0_1px_#000]">
        {sub.map((t, i) => (
          <div key={t} className={`flex h-[42px] items-center whitespace-nowrap pb-px pl-[44px] ${i === 4 ? "bg-[#4f90f5] text-white" : ""}`}><Geo k={i} /><span className="ml-2">{t}</span></div>
        ))}
      </div>
    </div>
  );
}
